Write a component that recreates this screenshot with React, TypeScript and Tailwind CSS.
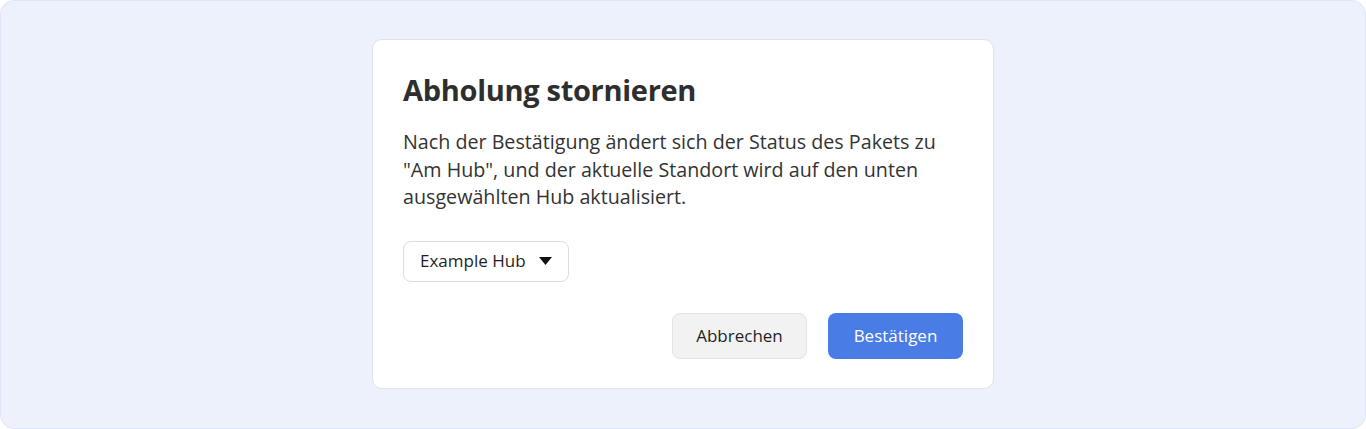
import { useState } from 'react';

const App = () => {
  const [hub] = useState('Example Hub');

  return (
    <div
      className="w-[1366px] h-[429px] bg-[#edf1fc] border border-[#dfe6f7] rounded-[14px] flex items-start justify-center pt-[38px]"
      style={{ fontFamily: '"Open Sans", "Noto Sans", sans-serif' }}
    >
      {/* Dialog */}
      <div className="w-[622px] bg-white border border-[#dfe2e8] rounded-[10px] px-[30px] pt-[30px] pb-[29px] text-[#2e2e2e]">
        <h2 className="text-[29px] leading-[40px] font-bold tracking-[-0.3px]">Abholung stornieren</h2>

        <p className="mt-[18px] text-[19.7px] leading-[27.5px] text-[#333]">
          Nach der Bestätigung ändert sich der Status des Pakets zu "Am Hub", und der aktuelle Standort wird auf den unten
          ausgewählten Hub aktualisiert.
        </p>

        <button className="mt-[30px] h-[41px] w-[166px] flex items-center justify-between pl-[16px] pr-[16px] border border-[#dadde3] rounded-[8px] bg-white text-[17px] text-[#1f1f1f]">
          <span>{hub}</span>
          <svg width="13" height="8" viewBox="0 0 13 8" className="ml-2">
            <path d="M0 0h13L6.5 8z" fill="#111" />
          </svg>
        </button>

        <div className="mt-[31px] flex justify-end gap-[21px]">
          <button className="h-[46px] w-[135px] rounded-[8px] bg-[#f2f2f2] border border-[#e3e3e3] text-[17px] text-[#1f1f1f]">
            Abbrechen
          </button>
          <button className="h-[46px] w-[135px] rounded-[8px] bg-[#4a7ce6] text-[17px] text-white">
            Bestätigen
          </button>
        </div>
      </div>
    </div>
  );
};

export default App;
